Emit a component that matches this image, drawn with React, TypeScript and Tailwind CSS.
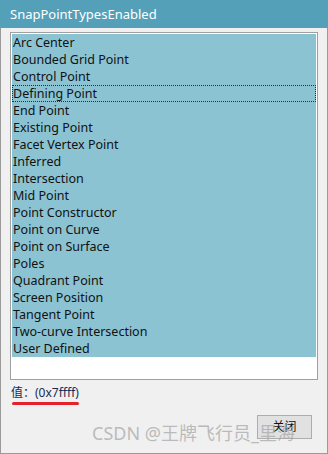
const items = [
  'Arc Center',
  'Bounded Grid Point',
  'Control Point',
  'Defining Point',
  'End Point',
  'Existing Point',
  'Facet Vertex Point',
  'Inferred',
  'Intersection',
  'Mid Point',
  'Point Constructor',
  'Point on Curve',
  'Point on Surface',
  'Poles',
  'Quadrant Point',
  'Screen Position',
  'Tangent Point',
  'Two-curve Intersection',
  'User Defined',
];

const font = { fontFamily: '"Noto Sans", "Noto Sans CJK SC", sans-serif' };

export default function App() {
  return (
    <div className="relative w-[328px] h-[454px] bg-[#f0f0f0] flex flex-col" style={font}>
      <div className="h-[28px] bg-[#54a0b9] text-white text-[13px] leading-[28px] pl-[10px]">
        SnapPointTypesEnabled
      </div>
      <div className="flex-1 flex flex-col border-x border-b border-[#9a9a9a] pl-[9px]">
        <div className="mt-[4px] w-[308px] h-[348px] border border-[#a0a0a0] bg-white p-px">
          {items.map((name) => (
            <div
              key={name}
              className={
                name === 'Defining Point'
                  ? 'h-[17px] bg-[#8bc3d3] text-[#111] text-[12.5px] leading-[15px] border border-dotted border-[#3a2a20]'
                  : 'h-[17px] bg-[#8bc3d3] text-[#111] text-[12.5px] leading-[17px] px-px'
              }
            >
              {name}
            </div>
          ))}
        </div>
        <div className="mt-[5px] pl-[1px] text-[12px] leading-[16px] text-[#1a2a50]">值：(0x7ffff)</div>
        <div className="mt-[1px] ml-[2px] w-[67px] h-[3px] rounded-full bg-[#e5212b]" />
        <div className="mt-[10px] ml-[247px] w-[55px] h-[24px] bg-[#e1e1e1] border border-[#adadad] text-[12px] text-[#111] flex items-center justify-center">
          关闭
        </div>
      </div>
      <div className="absolute left-[92px] top-[422px] text-[18px] leading-[22px] text-[#a8a8a8]/75 whitespace-nowrap">
        CSDN @王牌飞行员_里海
      </div>
    </div>
  );
}
